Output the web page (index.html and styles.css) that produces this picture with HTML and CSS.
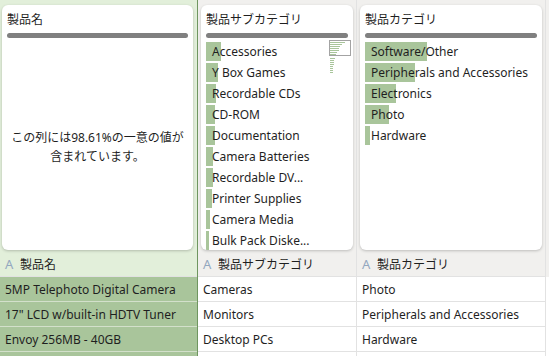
FILE: index.html
```html
<!DOCTYPE html>
<html lang="ja">
<head>
    <meta charset="UTF-8">
    <title>データ・プロファイル</title>
    <link rel="stylesheet" href="styles.css">
</head>
<body>
    <div class="grid">
        <!-- 製品名 -->
        <div class="col col-selected">
            <div class="card-wrap">
                <div class="card">
                    <div class="card-title">製品名</div>
                    <div class="card-bar"></div>
                    <div class="unique-note">この列には98.61%の一意の値が<br>含まれています。</div>
                </div>
            </div>
            <div class="col-head"><span class="type-icon">A</span>製品名</div>
            <div class="cell">5MP Telephoto Digital Camera</div>
            <div class="cell">17" LCD w/built-in HDTV Tuner</div>
            <div class="cell">Envoy 256MB - 40GB</div>
            <div class="cell"></div>
        </div>

        <!-- 製品サブカテゴリ -->
        <div class="col">
            <div class="card-wrap">
                <div class="card">
                    <div class="card-title">製品サブカテゴリ</div>
                    <div class="card-bar"></div>
                    <svg class="minimap" width="23" height="34" viewBox="0 0 23 34">
                        <g fill="#a9c59b">
                            <rect x="1" y="2" width="15" height="1"/>
                            <rect x="1" y="4" width="12" height="1"/>
                            <rect x="1" y="6" width="10" height="1"/>
                            <rect x="1" y="8" width="9" height="1"/>
                            <rect x="1" y="10" width="9" height="1"/>
                            <rect x="1" y="12" width="7" height="1"/>
                            <rect x="1" y="14" width="6" height="1"/>
                            <rect x="1" y="18" width="5" height="1"/>
                            <rect x="1" y="20" width="4" height="1"/>
                            <rect x="1" y="22" width="4" height="1"/>
                            <rect x="1" y="24" width="4" height="1"/>
                            <rect x="1" y="26" width="3" height="1"/>
                            <rect x="1" y="28" width="3" height="1"/>
                            <rect x="1" y="30" width="3" height="1"/>
                            <rect x="1" y="32" width="3" height="1"/>
                        </g>
                        <rect x="0.5" y="0.5" width="21" height="15" fill="none" stroke="#a3a3a3"/>
                    </svg>
                    <ul class="bars">
                        <li><span class="bar" style="width: 15px"></span><span class="label">Accessories</span></li>
                        <li><span class="bar" style="width: 12px"></span><span class="label">Y Box Games</span></li>
                        <li><span class="bar" style="width: 10px"></span><span class="label">Recordable CDs</span></li>
                        <li><span class="bar" style="width: 9px"></span><span class="label">CD-ROM</span></li>
                        <li><span class="bar" style="width: 9px"></span><span class="label">Documentation</span></li>
                        <li><span class="bar" style="width: 7px"></span><span class="label">Camera Batteries</span></li>
                        <li><span class="bar" style="width: 7px"></span><span class="label">Recordable DV...</span></li>
                        <li><span class="bar" style="width: 6px"></span><span class="label">Printer Supplies</span></li>
                        <li><span class="bar" style="width: 4px"></span><span class="label">Camera Media</span></li>
                        <li><span class="bar" style="width: 3px"></span><span class="label">Bulk Pack Diske...</span></li>
                    </ul>
                </div>
            </div>
            <div class="col-head"><span class="type-icon">A</span>製品サブカテゴリ</div>
            <div class="cell">Cameras</div>
            <div class="cell">Monitors</div>
            <div class="cell">Desktop PCs</div>
            <div class="cell"></div>
        </div>

        <!-- 製品カテゴリ -->
        <div class="col col-wide">
            <div class="card-wrap">
                <div class="card">
                    <div class="card-title">製品カテゴリ</div>
                    <div class="card-bar"></div>
                    <ul class="bars">
                        <li><span class="bar" style="width: 62px"></span><span class="label">Software/Other</span></li>
                        <li><span class="bar" style="width: 50px"></span><span class="label">Peripherals and Accessories</span></li>
                        <li><span class="bar" style="width: 31px"></span><span class="label">Electronics</span></li>
                        <li><span class="bar" style="width: 24px"></span><span class="label">Photo</span></li>
                        <li><span class="bar" style="width: 5px"></span><span class="label">Hardware</span></li>
                    </ul>
                </div>
            </div>
            <div class="col-head"><span class="type-icon">A</span>製品カテゴリ</div>
            <div class="cell">Photo</div>
            <div class="cell">Peripherals and Accessories</div>
            <div class="cell">Hardware</div>
            <div class="cell"></div>
        </div>

        <div class="col-filler"></div>
    </div>
</body>
</html>
```

FILE: styles.css
```css
:root {
    --green: #a9c59b;
    --green-light: #e2efda;
    --green-dark: #6f9660;
    --panel-bg: #f1f0ee;
    --line: #e2e2e2;
    --text: #1f1f1f;
    --bar-gray: #808080;
}

* {
    margin: 0;
    padding: 0;
    box-sizing: border-box;
}

body {
    font-family: 'Noto Sans', 'Noto Sans CJK JP', sans-serif;
    font-size: 12px;
    color: var(--text);
    background: #fff;
    overflow: hidden;
}

.grid {
    display: flex;
    height: 356px;
    overflow: hidden;
}

.col {
    width: 159px;
    flex-shrink: 0;
    overflow: hidden;
    background: var(--panel-bg);
    border-right: 1px solid var(--line);
}

.col-selected {
    width: 198px;
    background: var(--green-light);
    border-right: 1px solid var(--green-dark);
}

.col-wide {
    width: 189px;
}

.col-filler {
    flex: 1;
    background: linear-gradient(var(--panel-bg) 0 277px, #fff 277px);
}

.card-wrap {
    padding: 5px 3px 1px 3px;
}

.col-selected .card-wrap {
    padding: 5px 4px 1px 2px;
}

.card {
    position: relative;
    height: 245px;
    background: #fff;
    border-radius: 6px;
    box-shadow: 0 1px 3px rgba(0, 0, 0, 0.22);
    padding: 7px 5px 0 5px;
    overflow: hidden;
}

.card-title {
    line-height: 16px;
    font-size: 12px;
    white-space: nowrap;
}

.card-bar {
    height: 5px;
    margin-top: 5px;
    background: var(--bar-gray);
    border-radius: 3px;
}

.unique-note {
    margin-top: 90px;
    text-align: center;
    line-height: 19px;
}

.minimap {
    position: absolute;
    left: 128px;
    top: 35px;
}

.bars {
    list-style: none;
    margin-top: 4px;
}

.bars li {
    position: relative;
    height: 21px;
    line-height: 19px;
    padding-left: 6px;
    white-space: nowrap;
}

.bars .bar {
    position: absolute;
    left: 0;
    top: 0;
    height: 19px;
    background: var(--green);
}

.bars .label {
    position: relative;
}

.col-head {
    height: 26px;
    line-height: 27px;
    padding-left: 5px;
    border-bottom: 1px solid var(--line);
    white-space: nowrap;
}

.type-icon {
    display: inline-block;
    width: 15px;
    color: #93a7bf;
    font-size: 13px;
}

.cell {
    height: 25px;
    line-height: 26px;
    padding-left: 5px;
    background: #fff;
    border-bottom: 1px solid var(--line);
    white-space: nowrap;
    overflow: hidden;
}

.col-selected .cell {
    background: var(--green);
    border-bottom-color: #d3e0cb;
}
```
